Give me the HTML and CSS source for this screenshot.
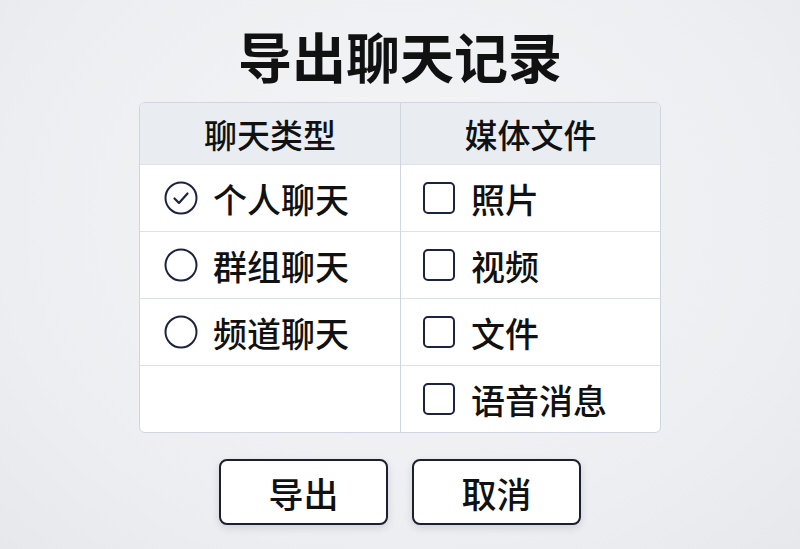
FILE: index.html
```html
<!DOCTYPE html>
<html lang="zh">
<head>
<meta charset="utf-8">
<link rel="stylesheet" href="styles.css">
</head>
<body>
<div class="page">
  <h1 class="title">导出聊天记录</h1>
  <div class="table">
    <div class="col">
      <div class="head">聊天类型</div>
      <div class="cell"><svg class="ico" viewBox="0 0 34 34"><circle cx="17" cy="17" r="15.5" fill="none" stroke="#1c2340" stroke-width="2"/><path d="M10.5 17.5 L15 22 L23.5 12.5" fill="none" stroke="#1c2340" stroke-width="2.2" stroke-linecap="round" stroke-linejoin="round"/></svg><span>个人聊天</span></div>
      <div class="cell"><svg class="ico" viewBox="0 0 34 34"><circle cx="17" cy="17" r="15.5" fill="none" stroke="#1c2340" stroke-width="2"/></svg><span>群组聊天</span></div>
      <div class="cell"><svg class="ico" viewBox="0 0 34 34"><circle cx="17" cy="17" r="15.5" fill="none" stroke="#1c2340" stroke-width="2"/></svg><span>频道聊天</span></div>
      <div class="cell last"></div>
    </div>
    <div class="col">
      <div class="head">媒体文件</div>
      <div class="cell"><span class="box"></span><span>照片</span></div>
      <div class="cell"><span class="box"></span><span>视频</span></div>
      <div class="cell"><span class="box"></span><span>文件</span></div>
      <div class="cell last"><span class="box"></span><span>语音消息</span></div>
    </div>
  </div>
  <div class="buttons">
    <button class="btn">导出</button>
    <button class="btn">取消</button>
  </div>
</div>
</body>
</html>
```
FILE: styles.css
```css
html, body {
  margin: 0;
  padding: 0;
}
body {
  width: 800px;
  height: 549px;
  overflow: hidden;
  background: radial-gradient(ellipse at 50% 40%, #f4f5f7 0%, #eceef1 70%, #e6e8ec 100%);
  font-family: "Noto Sans CJK SC", "Noto Sans", sans-serif;
  color: #111;
}
.page {
  display: flex;
  flex-direction: column;
  align-items: center;
  padding-top: 26px;
}
.title {
  margin: 0;
  font-size: 54px;
  line-height: 60px;
  font-weight: 700;
  letter-spacing: 0;
}
.table {
  margin-top: 16px;
  width: 522px;
  display: grid;
  grid-template-columns: 260px 260px;
  border: 1px solid #cfd6e0;
  border-radius: 6px;
  overflow: hidden;
  background: #fff;
  box-sizing: border-box;
}
.col + .col {
  border-left: 1px solid #cfd6e0;
}
.head {
  height: 62px;
  background: #e9edf2;
  display: flex;
  align-items: center;
  justify-content: center;
  font-size: 33px;
  font-weight: 500;
  border-bottom: 1px solid #dde2e9;
  box-sizing: border-box;
}
.cell {
  height: 67px;
  display: flex;
  align-items: center;
  padding-left: 24px;
  gap: 15px;
  font-size: 34px;
  font-weight: 500;
  border-bottom: 1px solid #dde2e9;
  box-sizing: border-box;
}
.col + .col .cell {
  padding-left: 22px;
  gap: 16px;
}
.cell.last {
  border-bottom: none;
  height: 66px;
}
.ico {
  width: 34px;
  height: 34px;
  flex: none;
}
.box {
  width: 32px;
  height: 32px;
  border: 2px solid #1c2340;
  border-radius: 5px;
  box-sizing: border-box;
  flex: none;
}
.buttons {
  margin-top: 26px;
  display: flex;
  gap: 24px;
}
.btn {
  width: 169px;
  height: 66px;
  background: #fff;
  border: 2px solid #1a1f33;
  border-radius: 8px;
  box-shadow: 0 3px 8px rgba(0, 0, 0, 0.12);
  font-family: "Noto Sans CJK SC", "Noto Sans", sans-serif;
  font-size: 35px;
  font-weight: 500;
  color: #111;
  padding: 0;
}
```
